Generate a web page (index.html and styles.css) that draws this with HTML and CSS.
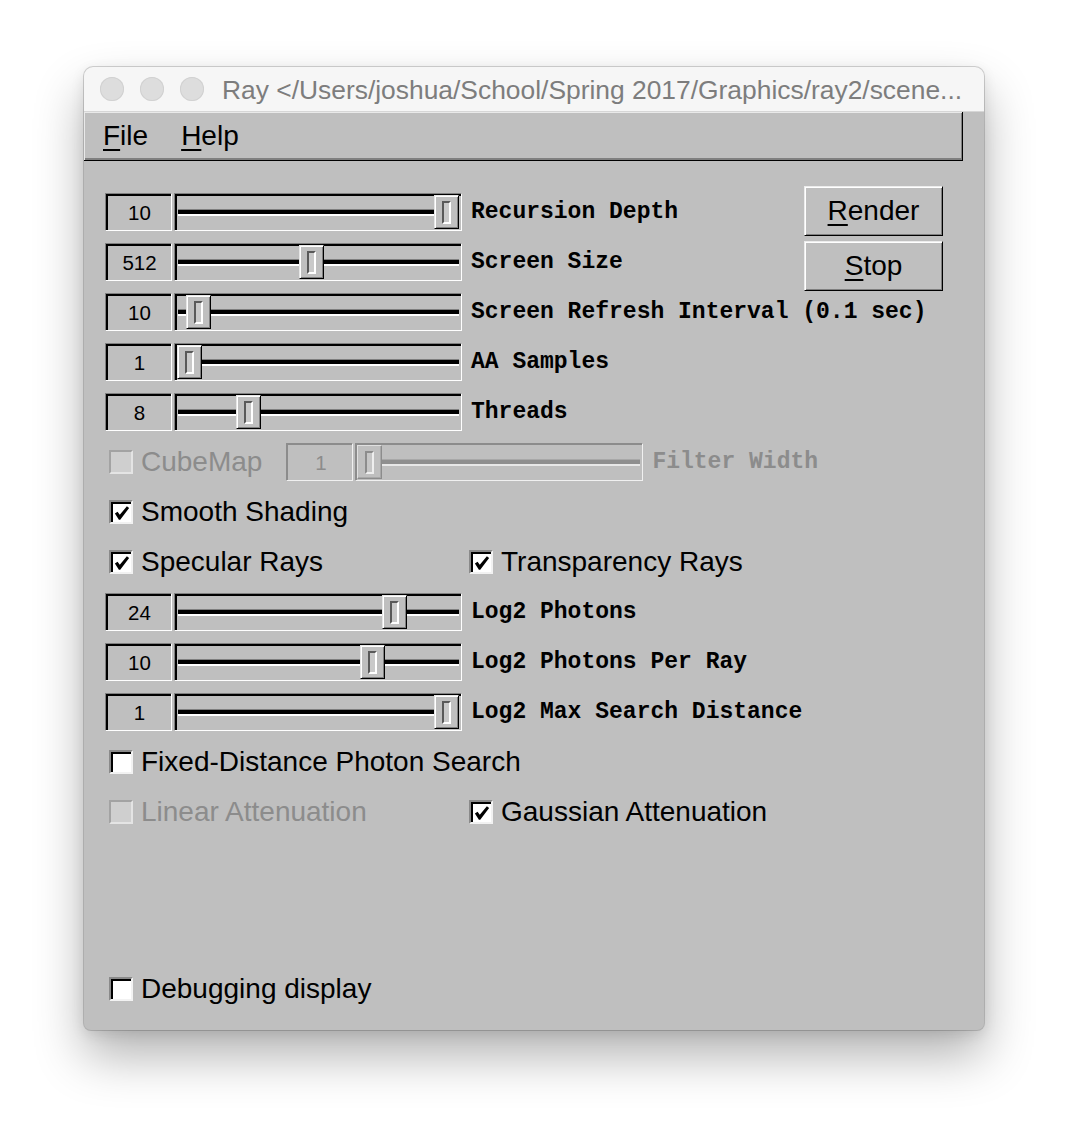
FILE: index.html
```html
<!DOCTYPE html>
<html>
<head>
<meta charset="utf-8">
<title>Ray</title>
<link rel="stylesheet" href="styles.css">
</head>
<body>
<div class="window">
  <div class="titlebar">
    <span class="light"></span><span class="light"></span><span class="light last"></span>
    <span class="title">Ray &lt;/Users/joshua/School/Spring 2017/Graphics/ray2/scene...</span>
  </div>
  <div class="main">
    <div class="menubar">
      <span class="menu"><u>F</u>ile</span>
      <span class="menu"><u>H</u>elp</span>
    </div>
    <div class="content">
      <div class="top">
        <div class="top-rows">
          <div class="row">
            <div class="val">10</div>
            <div class="slider"><div class="track"></div><div class="knob" style="left:259px"><div class="knob-in"></div></div></div>
            <span class="lab">Recursion Depth</span>
          </div>
          <div class="row">
            <div class="val">512</div>
            <div class="slider"><div class="track"></div><div class="knob" style="left:124px"><div class="knob-in"></div></div></div>
            <span class="lab">Screen Size</span>
          </div>
        </div>
        <div class="buttons">
          <div class="btn"><span><u>R</u>ender</span></div>
          <div class="btn"><span><u>S</u>top</span></div>
        </div>
      </div>
      <div class="row">
        <div class="val">10</div>
        <div class="slider"><div class="track"></div><div class="knob" style="left:11px"><div class="knob-in"></div></div></div>
        <span class="lab">Screen Refresh Interval (0.1 sec)</span>
      </div>
      <div class="row">
        <div class="val">1</div>
        <div class="slider"><div class="track"></div><div class="knob" style="left:2px"><div class="knob-in"></div></div></div>
        <span class="lab">AA Samples</span>
      </div>
      <div class="row">
        <div class="val">8</div>
        <div class="slider"><div class="track"></div><div class="knob" style="left:61px"><div class="knob-in"></div></div></div>
        <span class="lab">Threads</span>
      </div>
      <div class="row disabled cube-row">
        <span class="cb"></span><span class="cl">CubeMap</span>
        <div class="val cube-val">1</div>
        <div class="slider"><div class="track"></div><div class="knob" style="left:1px"><div class="knob-in"></div></div></div>
        <span class="lab">Filter Width</span>
      </div>
      <div class="chk-row">
        <span class="cb"><svg viewBox="0 0 18 18" width="18" height="18"><path d="M1 9.5 L4 7.5 L6.5 11 L14.5 1.5 L17 3.5 L7 16.5 L5.5 16.5 Z" fill="#000"/></svg></span><span class="cl">Smooth Shading</span>
      </div>
      <div class="two">
        <div class="chk-cell">
          <span class="cb"><svg viewBox="0 0 18 18" width="18" height="18"><path d="M1 9.5 L4 7.5 L6.5 11 L14.5 1.5 L17 3.5 L7 16.5 L5.5 16.5 Z" fill="#000"/></svg></span><span class="cl">Specular Rays</span>
        </div>
        <div class="chk-cell">
          <span class="cb"><svg viewBox="0 0 18 18" width="18" height="18"><path d="M1 9.5 L4 7.5 L6.5 11 L14.5 1.5 L17 3.5 L7 16.5 L5.5 16.5 Z" fill="#000"/></svg></span><span class="cl">Transparency Rays</span>
        </div>
      </div>
      <div class="row">
        <div class="val">24</div>
        <div class="slider"><div class="track"></div><div class="knob" style="left:207px"><div class="knob-in"></div></div></div>
        <span class="lab">Log2 Photons</span>
      </div>
      <div class="row">
        <div class="val">10</div>
        <div class="slider"><div class="track"></div><div class="knob" style="left:185px"><div class="knob-in"></div></div></div>
        <span class="lab">Log2 Photons Per Ray</span>
      </div>
      <div class="row">
        <div class="val">1</div>
        <div class="slider"><div class="track"></div><div class="knob" style="left:259px"><div class="knob-in"></div></div></div>
        <span class="lab">Log2 Max Search Distance</span>
      </div>
      <div class="chk-row">
        <span class="cb"></span><span class="cl">Fixed-Distance Photon Search</span>
      </div>
      <div class="two">
        <div class="chk-cell disabled">
          <span class="cb"></span><span class="cl">Linear Attenuation</span>
        </div>
        <div class="chk-cell">
          <span class="cb"><svg viewBox="0 0 18 18" width="18" height="18"><path d="M1 9.5 L4 7.5 L6.5 11 L14.5 1.5 L17 3.5 L7 16.5 L5.5 16.5 Z" fill="#000"/></svg></span><span class="cl">Gaussian Attenuation</span>
        </div>
      </div>
      <div class="chk-row debug">
        <span class="cb"></span><span class="cl">Debugging display</span>
      </div>
    </div>
  </div>
</div>
</body>
</html>
```
FILE: styles.css
```css
html, body {
  margin: 0;
  padding: 0;
  background: #ffffff;
}

body {
  min-height: 1130px;
  padding-top: 67px;
  box-sizing: border-box;
}

.window {
  margin: 0 0 0 84px;
  width: 900px;
  height: 963px;
  box-sizing: border-box;
  border-radius: 9px 9px 7px 7px;
  overflow: hidden;
  background: #bfbfbf;
  display: flex;
  flex-direction: column;
  box-shadow: 0 0 0 1px rgba(0, 0, 0, 0.16), 0 26px 50px rgba(0, 0, 0, 0.3), 0 4px 14px rgba(0, 0, 0, 0.1);
}

.titlebar {
  height: 44px;
  flex: none;
  border-bottom: 1px solid #d6d6d6;
  background: #f6f6f6;
  display: flex;
  align-items: center;
  padding-left: 16px;
}

.light {
  width: 24px;
  height: 24px;
  border-radius: 50%;
  background: #dddddd;
  box-shadow: inset 0 0 0 1px #d1d1d1;
  margin-right: 16px;
  flex: none;
}

.light.last {
  margin-right: 18px;
}

.title {
  font-family: "Liberation Sans", Arial, sans-serif;
  font-size: 26.4px;
  color: #7d7d7d;
  white-space: nowrap;
  padding-top: 2px;
}

.main {
  flex: 1;
  display: flex;
  flex-direction: column;
  min-height: 0;
}

.menubar {
  flex: none;
  width: 879px;
  height: 49px;
  box-sizing: border-box;
  border-right: 1px solid #000;
  border-bottom: 1px solid #000;
  box-shadow: inset 1px 1px 0 #e9e9e9, inset -1px -2px 0 #808080;
  display: flex;
  align-items: center;
  padding-left: 19px;
  font-family: "Liberation Sans", Arial, sans-serif;
  font-size: 28px;
  color: #000;
}

.menu {
  margin-right: 33px;
}

u {
  text-decoration: underline;
  text-decoration-thickness: 2px;
  text-underline-offset: 4px;
}

.content {
  flex: 1;
  display: flex;
  flex-direction: column;
  gap: 12px;
  padding: 32px 41px 22px 21px;
  min-height: 0;
}

.top {
  display: flex;
  justify-content: space-between;
  align-items: flex-start;
}

.top-rows {
  display: flex;
  flex-direction: column;
  gap: 12px;
}

.buttons {
  display: flex;
  flex-direction: column;
  gap: 5px;
  margin-top: -7px;
  margin-bottom: -10px;
}

.btn {
  width: 139px;
  height: 50px;
  box-sizing: border-box;
  border: 1px solid;
  border-color: #ececec #000 #000 #ececec;
  box-shadow: inset 1px 1px 0 #fff, inset -1px -1px 0 #7f7f7f;
  background: #bfbfbf;
  display: flex;
  align-items: center;
  justify-content: center;
  font-family: "Liberation Sans", Arial, sans-serif;
  font-size: 28px;
  color: #000;
}

.row {
  display: flex;
  align-items: center;
  height: 38px;
}

.val {
  width: 67px;
  height: 38px;
  flex: none;
  box-sizing: border-box;
  border: 1px solid;
  border-color: #808080 #fff #fff #808080;
  box-shadow: inset 2px 2px 0 #000;
  display: flex;
  align-items: center;
  justify-content: center;
  font-family: "Liberation Sans", Arial, sans-serif;
  font-size: 20.5px;
  color: #000;
  padding: 1px 0 0 2px;
}

.slider {
  position: relative;
  width: 288px;
  height: 38px;
  flex: none;
  margin-left: 2px;
  box-sizing: border-box;
  border: 1px solid;
  border-color: #808080 #fff #fff #808080;
  box-shadow: inset 2px 2px 0 #000;
  display: flex;
  align-items: center;
  padding: 1px 2px 0 3px;
}

.track {
  flex: 1;
  height: 4px;
  background: #000;
  border-top: 1px solid #7f7f7f;
  border-bottom: 2px solid #fff;
}

.knob {
  position: absolute;
  top: 1px;
  width: 25px;
  height: 34px;
  box-sizing: border-box;
  border: 1px solid;
  border-color: #e6e6e6 #000 #000 #e6e6e6;
  box-shadow: inset 1px 1px 0 #fff, inset -1px -1px 0 #7f7f7f;
  background: #bfbfbf;
  display: flex;
  align-items: center;
  justify-content: center;
}

.knob-in {
  width: 9px;
  height: 23px;
  box-sizing: border-box;
  border: 2px solid;
  border-color: #595959 #fff #fff #595959;
  background: #c9c9c9;
}

.lab {
  margin-left: 9px;
  font-family: "Liberation Mono", "Courier New", monospace;
  font-weight: bold;
  font-size: 23px;
  color: #000;
  white-space: nowrap;
}

.chk-row {
  display: flex;
  align-items: center;
  height: 38px;
  padding-left: 4px;
}

.two {
  display: grid;
  grid-template-columns: 360px auto;
  height: 38px;
  padding-left: 4px;
}

.chk-cell {
  display: flex;
  align-items: center;
}

.cb {
  width: 24px;
  height: 24px;
  flex: none;
  box-sizing: border-box;
  border: 2px solid;
  border-color: #8a8a8a #f2f2f2 #f2f2f2 #8a8a8a;
  box-shadow: inset 2px 2px 0 #000;
  background: #fff;
  display: flex;
  align-items: center;
  justify-content: center;
  padding: 2px 0 0 2px;
  overflow: hidden;
}

.cb svg {
  display: block;
  width: 16px;
  height: 16px;
  flex: none;
}

.cl {
  margin-left: 8px;
  font-family: "Liberation Sans", Arial, sans-serif;
  font-size: 28px;
  color: #000;
  white-space: nowrap;
}

.cube-row {
  padding-left: 4px;
}

.cube-val {
  margin-left: 24px;
}

.disabled .cl,
.disabled .lab,
.disabled .val {
  color: #8c8c8c;
}

.disabled .cb {
  background: #cfcfcf;
  border-color: #a3a3a3 #e4e4e4 #e4e4e4 #a3a3a3;
  box-shadow: none;
}

.disabled .val,
.disabled .slider {
  border-color: #8c8c8c #f0f0f0 #f0f0f0 #8c8c8c;
  box-shadow: inset 1px 1px 0 #8c8c8c;
}

.disabled .track {
  background: #8f8f8f;
  border-top-color: #a8a8a8;
  border-bottom-color: #e8e8e8;
}

.disabled .knob {
  border-color: #e0e0e0 #8c8c8c #8c8c8c #e0e0e0;
  box-shadow: inset -1px -1px 0 #a8a8a8;
}

.disabled .knob-in {
  border-color: #8c8c8c #eeeeee #eeeeee #8c8c8c;
  background: #c6c6c6;
}

.debug {
  margin-top: auto;
}
```
